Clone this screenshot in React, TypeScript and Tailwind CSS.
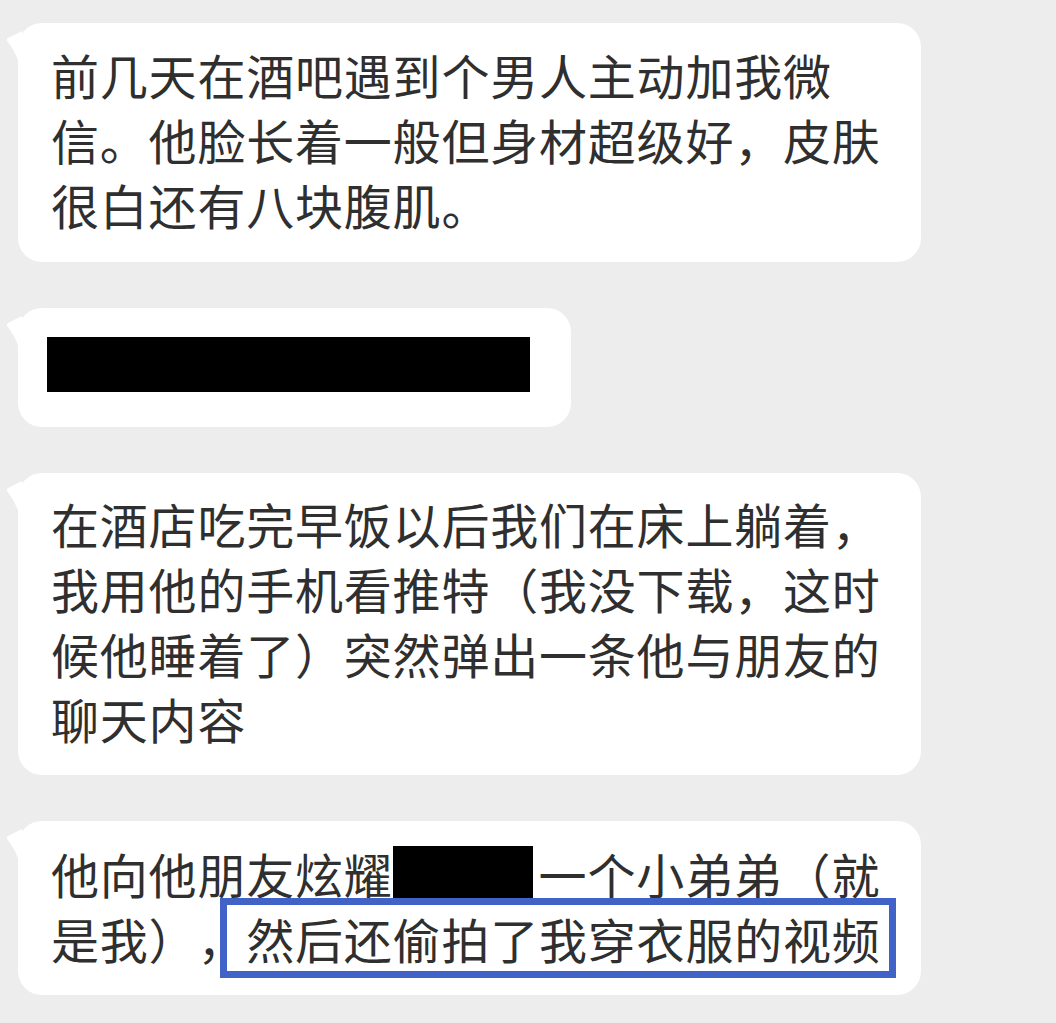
import React from "react";

const Tail = () => (
  <svg
    className="absolute left-[-12px] top-[4px]"
    width="16"
    height="36"
    viewBox="0 0 16 36"
  >
    <path d="M16 4 L2 11 Q0 12.5 1.5 14.5 Q9 24 13 36 L16 36 Z" fill="#ffffff" />
  </svg>
);

const Bubble = ({
  children,
  className,
}: {
  children: React.ReactNode;
  className: string;
}) => (
  <div className={"relative rounded-[24px] bg-white " + className}>
    <Tail />
    {children}
  </div>
);

const Line = ({ children }: { children: React.ReactNode }) => (
  <div className="whitespace-nowrap">{children}</div>
);

export default function App() {
  return (
    <div
      className="h-[1023px] w-[1056px] overflow-hidden bg-[#ededed] pl-[18px] pt-[23px] text-[48px] leading-[65px] tracking-[0.8px] text-[#2f2f2f] [text-spacing-trim:space-all]"
      style={{ fontFamily: '"Noto Sans CJK SC", "Noto Sans", sans-serif' }}
    >
      <div className="flex flex-col gap-[46px]">
        <Bubble className="w-[903px] pl-[33px] pt-[19px] pb-[25px]">
          <Line>前几天在酒吧遇到个男人主动加我微</Line>
          <Line>信。他脸长着一般但身材超级好，皮肤</Line>
          <Line>很白还有八块腹肌。</Line>
        </Bubble>

        <Bubble className="w-[553px] pl-[29px] pt-[26px] pb-[28px]">
          <div className="flex h-[65px] items-start pt-[3px]">
            <div className="h-[55px] w-[483px] bg-black" />
          </div>
        </Bubble>

        <Bubble className="w-[903px] pl-[33px] pt-[18px] pb-[24px]">
          <Line>在酒店吃完早饭以后我们在床上躺着，</Line>
          <Line>我用他的手机看推特（我没下载，这时</Line>
          <Line>候他睡着了）突然弹出一条他与朋友的</Line>
          <Line>聊天内容</Line>
        </Bubble>

        <Bubble className="w-[903px] pl-[33px] pt-[20px] pb-[24px]">
          <Line>
            他向他朋友炫耀
            <span className="mr-[6px] inline-block h-[55px] w-[140px] translate-y-[5px] bg-black align-top" />
            一个小弟弟（就
          </Line>
          <Line>
            是我），
            <span className="relative">
              <span className="absolute left-[-26px] right-[-15px] top-[-5px] bottom-[-5px] border-[7px] border-[#4163c8]" />
              <span className="relative">然后还偷拍了我穿衣服的视频</span>
            </span>
          </Line>
        </Bubble>
      </div>
    </div>
  );
}
